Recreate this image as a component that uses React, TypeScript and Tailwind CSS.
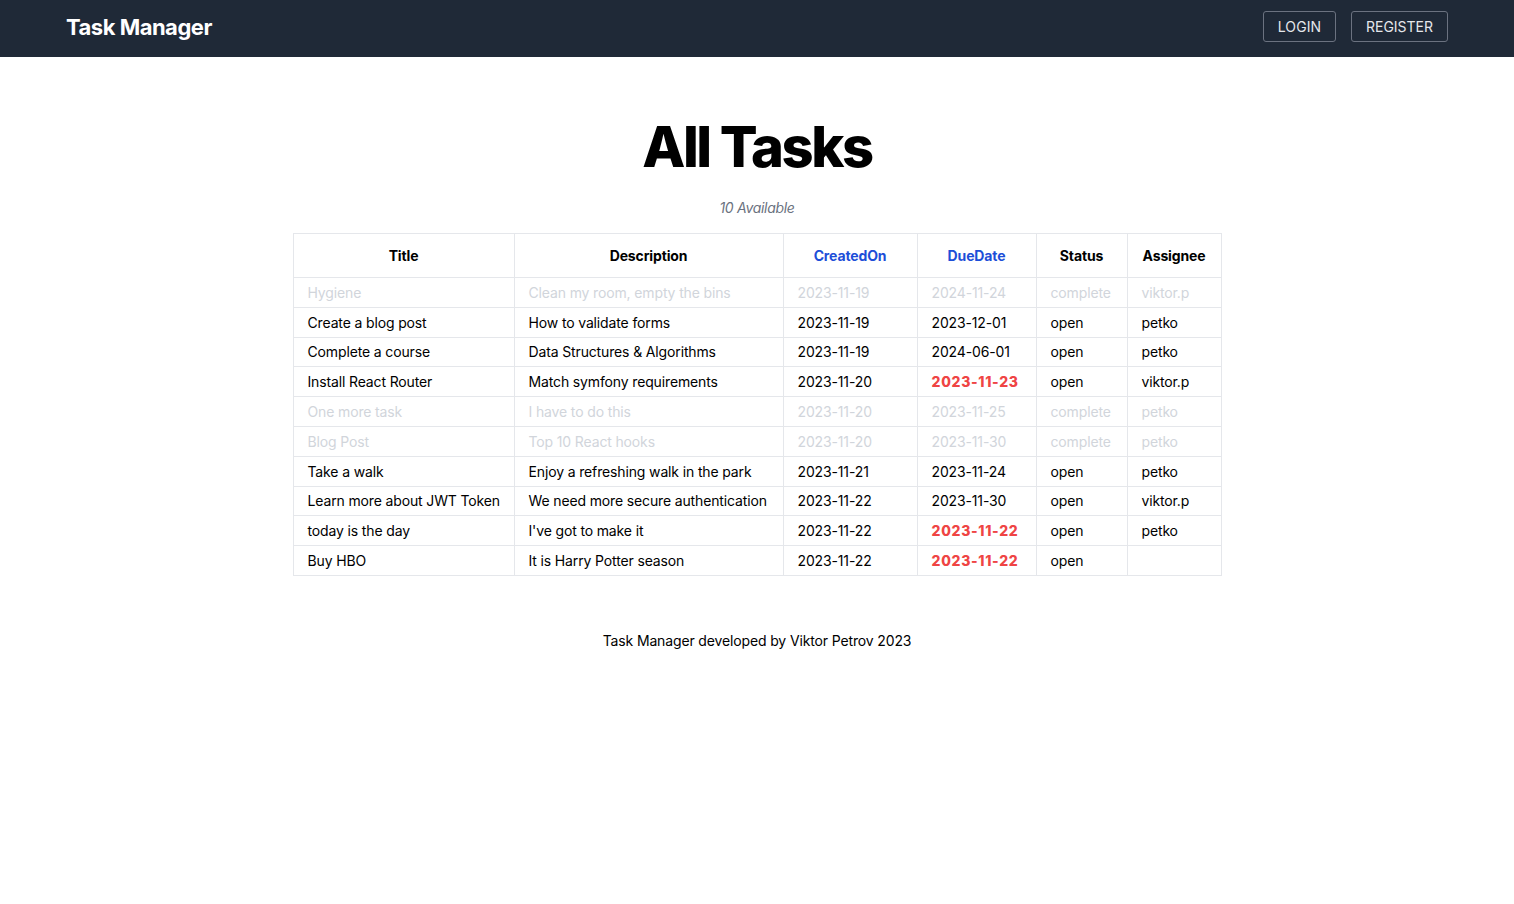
import React from "react";

type Task = {
  title: string;
  description: string;
  createdOn: string;
  dueDate: string;
  status: string;
  assignee: string;
  overdue?: boolean;
};

const tasks: Task[] = [
  { title: "Hygiene", description: "Clean my room, empty the bins", createdOn: "2023-11-19", dueDate: "2024-11-24", status: "complete", assignee: "viktor.p" },
  { title: "Create a blog post", description: "How to validate forms", createdOn: "2023-11-19", dueDate: "2023-12-01", status: "open", assignee: "petko" },
  { title: "Complete a course", description: "Data Structures & Algorithms", createdOn: "2023-11-19", dueDate: "2024-06-01", status: "open", assignee: "petko" },
  { title: "Install React Router", description: "Match symfony requirements", createdOn: "2023-11-20", dueDate: "2023-11-23", status: "open", assignee: "viktor.p", overdue: true },
  { title: "One more task", description: "I have to do this", createdOn: "2023-11-20", dueDate: "2023-11-25", status: "complete", assignee: "petko" },
  { title: "Blog Post", description: "Top 10 React hooks", createdOn: "2023-11-20", dueDate: "2023-11-30", status: "complete", assignee: "petko" },
  { title: "Take a walk", description: "Enjoy a refreshing walk in the park", createdOn: "2023-11-21", dueDate: "2023-11-24", status: "open", assignee: "petko" },
  { title: "Learn more about JWT Token", description: "We need more secure authentication", createdOn: "2023-11-22", dueDate: "2023-11-30", status: "open", assignee: "viktor.p" },
  { title: "today is the day", description: "I've got to make it", createdOn: "2023-11-22", dueDate: "2023-11-22", status: "open", assignee: "petko", overdue: true },
  { title: "Buy HBO", description: "It is Harry Potter season", createdOn: "2023-11-22", dueDate: "2023-11-22", status: "open", assignee: "", overdue: true },
];

export default function App() {
  return (
    <div className="min-h-screen bg-white text-black" style={{ fontFamily: "Inter, 'Noto Sans', sans-serif" }}>
      <nav className="h-[57px] bg-[#1f2937] flex items-start justify-between px-[66px] pt-[11px]">
        <span className="text-white text-[22px] leading-[30px] font-bold tracking-[-0.5px] mt-[1px]">Task Manager</span>
        <div className="flex items-center gap-[15px]">
          <button className="h-[31px] w-[73px] border border-[#6b7280] rounded-[3px] text-[#e5e7eb] text-[14px] tracking-[0.1px]">LOGIN</button>
          <button className="h-[31px] w-[97px] border border-[#6b7280] rounded-[3px] text-[#e5e7eb] text-[14px]">REGISTER</button>
        </div>
      </nav>

      <main className="flex flex-col items-center tracking-[-0.14px]">
        <h1 className="mt-[62px] text-[56px] leading-none font-extrabold tracking-[-2.4px]">All Tasks</h1>
        <p className="mt-[23px] text-[14px] leading-[20px] italic text-[#6b7280] tracking-[-0.3px]">10 Available</p>

        <table className="mt-[15px] w-[928px] border-collapse border border-[#e5e7eb] text-[14px] table-fixed">
          <colgroup>
            <col className="w-[221px]" />
            <col className="w-[269px]" />
            <col className="w-[134px]" />
            <col className="w-[119px]" />
            <col className="w-[91px]" />
            <col className="w-[94px]" />
          </colgroup>
          <thead>
            <tr className="h-[44px]">
              <th className="border border-[#e5e7eb] font-bold text-center">Title</th>
              <th className="border border-[#e5e7eb] font-bold text-center">Description</th>
              <th className="border border-[#e5e7eb] font-bold text-center text-[#1d4ed8]">CreatedOn</th>
              <th className="border border-[#e5e7eb] font-bold text-center text-[#1d4ed8]">DueDate</th>
              <th className="border border-[#e5e7eb] font-bold text-center">Status</th>
              <th className="border border-[#e5e7eb] font-bold text-center">Assignee</th>
            </tr>
          </thead>
          <tbody>
            {tasks.map((t, i) => {
              const done = t.status === "complete";
              const cell = "border border-[#e5e7eb] px-[14px] text-left whitespace-nowrap";
              const color = done ? "text-[#d1d5db]" : "text-black";
              return (
                <tr key={i} className={`h-[29.8px] ${color}`}>
                  <td className={cell}>{t.title}</td>
                  <td className={cell}>{t.description}</td>
                  <td className={cell}>{t.createdOn}</td>
                  <td className={`${cell} ${t.overdue ? "text-[#ef4444] font-extrabold tracking-[0.7px]" : ""}`}>{t.dueDate}</td>
                  <td className={cell}>{t.status}</td>
                  <td className={cell}>{t.assignee}</td>
                </tr>
              );
            })}
          </tbody>
        </table>

        <p className="mt-[55px] text-[14px] leading-[20px]">Task Manager developed by Viktor Petrov 2023</p>
      </main>
    </div>
  );
}
